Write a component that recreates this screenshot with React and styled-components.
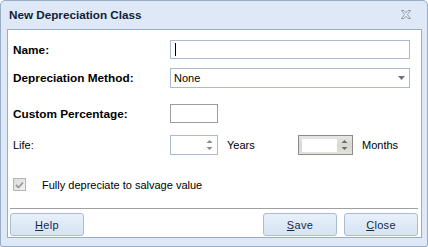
import React from 'react';
import styled, { createGlobalStyle } from 'styled-components';

const GlobalStyle = createGlobalStyle`
  html, body {
    margin: 0;
    padding: 0;
    background: #ffffff;
  }
  body {
    font-family: "Liberation Sans", Arial, sans-serif;
    font-size: 11px;
    color: #000;
  }
`;

const CloseIcon = () => (
  <svg width="12" height="11" viewBox="0 0 12 11">
    <path
      d="M1.5 1.5 L4 1.5 L6 3.8 L8 1.5 L10.5 1.5 L7.3 5.5 L10.5 9.5 L8 9.5 L6 7.2 L4 9.5 L1.5 9.5 L4.7 5.5 Z"
      fill="#eef2f8"
      stroke="#8b9bb4"
      strokeWidth="1"
      strokeLinejoin="round"
    />
  </svg>
);

const SpinArrows = ({ disabled }) => (
  <svg width="7" height="12" viewBox="0 0 7 12">
    <path d="M3.5 1 L6.5 4 L0.5 4 Z" fill={disabled ? '#6d6d6d' : '#8a8a8a'} />
    <path d="M0.5 8 L6.5 8 L3.5 11 Z" fill={disabled ? '#6d6d6d' : '#8a8a8a'} />
  </svg>
);

const App = () => (
  <>
    <GlobalStyle />
    <Window>
      <TitleBar>
        <Title>New Depreciation Class</Title>
        <CloseButton>
          <CloseIcon />
        </CloseButton>
      </TitleBar>

      <Panel>
        <Form>
          <Row $mt={10}>
            <Label $bold>Name:</Label>
            <TextBox $width={240} $height={19}>
              <Caret />
            </TextBox>
          </Row>

          <Row $mt={9}>
            <Label $bold>Depreciation Method:</Label>
            <Select>
              <span>None</span>
              <svg width="7" height="4" viewBox="0 0 7 4">
                <path d="M0 0 L7 0 L3.5 4 Z" fill="#6d7480" />
              </svg>
            </Select>
          </Row>

          <Row $mt={16}>
            <Label $bold>Custom Percentage:</Label>
            <TextBox $width={48} $height={19} $gray />
          </Row>

          <Row $mt={12}>
            <Label>Life:</Label>
            <Spinner $width={48}>
              <SpinField />
              <SpinButtons>
                <SpinArrows />
              </SpinButtons>
            </Spinner>
            <Unit $width={71}>Years</Unit>
            <DisabledSpinner>
              <DisabledField />
              <DisabledButtons>
                <SpinArrows disabled />
              </DisabledButtons>
            </DisabledSpinner>
            <Unit>Months</Unit>
          </Row>

          <CheckRow>
            <CheckBox>
              <svg width="9" height="8" viewBox="0 0 9 8">
                <path d="M1 4 L3.5 6.5 L8 1.5" fill="none" stroke="#9a9a9a" strokeWidth="1.8" />
              </svg>
            </CheckBox>
            <span>Fully depreciate to salvage value</span>
          </CheckRow>
        </Form>

        <Footer>
          <Button>
            <u>H</u>elp
          </Button>
          <Spacer />
          <Button>
            <u>S</u>ave
          </Button>
          <Button>
            <u>C</u>lose
          </Button>
        </Footer>
      </Panel>
    </Window>
  </>
);

export default App;

const Window = styled.div`
  box-sizing: border-box;
  width: 428px;
  height: 247px;
  display: flex;
  flex-direction: column;
  background: #dfe8f6;
  border: 1px solid #99acc6;
  border-radius: 5px 5px 2px 2px;
  padding: 0 5px 8px 6px;
`;

const TitleBar = styled.div`
  height: 27px;
  display: flex;
  align-items: center;
  padding: 0 10px 1px 2px;
`;

const Title = styled.div`
  flex: 1;
  font-weight: bold;
  font-size: 11.7px;
  color: #0f1f38;
`;

const CloseButton = styled.div`
  display: flex;
  align-items: center;
`;

const Panel = styled.div`
  flex: 1;
  display: flex;
  flex-direction: column;
  background: #ffffff;
  border: 1px solid #99acc6;
`;

const Form = styled.div`
  flex: 1;
  display: flex;
  flex-direction: column;
  padding-left: 5px;
`;

const Row = styled.div`
  display: flex;
  align-items: center;
  margin-top: ${p => p.$mt}px;
`;

const Label = styled.div`
  width: 157px;
  flex-shrink: 0;
  font-weight: ${p => (p.$bold ? 'bold' : 'normal')};
  font-size: ${p => (p.$bold ? '11.8px' : '11px')};
`;

const TextBox = styled.div`
  box-sizing: border-box;
  flex-shrink: 0;
  width: ${p => p.$width}px;
  height: ${p => p.$height}px;
  border: 1px solid ${p => (p.$gray ? '#9c9c9c' : '#abbad0')};
  background: #fff;
  display: flex;
  align-items: center;
  padding-left: 4px;
`;

const Caret = styled.div`
  width: 1px;
  height: 13px;
  background: #000;
`;

const Select = styled.div`
  box-sizing: border-box;
  width: 240px;
  height: 20px;
  border: 1px solid #abbad0;
  display: flex;
  align-items: center;
  justify-content: space-between;
  padding: 0 4px 0 3px;
`;

const Spinner = styled.div`
  box-sizing: border-box;
  flex-shrink: 0;
  width: ${p => p.$width}px;
  height: 20px;
  border: 1px solid #abbad0;
  display: flex;
`;

const SpinField = styled.div`
  flex: 1;
`;

const SpinButtons = styled.div`
  width: 16px;
  display: flex;
  align-items: center;
  justify-content: center;
`;

const Unit = styled.div`
  flex-shrink: 0;
  margin-left: 9px;
  width: ${p => (p.$width ? `${p.$width}px` : 'auto')};
`;

const DisabledSpinner = styled.div`
  box-sizing: border-box;
  flex-shrink: 0;
  width: 55px;
  height: 20px;
  border: 1px solid #8c8c8c;
  background: linear-gradient(#e6e6e6, #d8d8d0 50%, #e2e2de);
  display: flex;
  align-items: center;
  padding: 2px 0 2px 3px;
`;

const DisabledField = styled.div`
  width: 35px;
  height: 13px;
  background: #ffffff;
`;

const DisabledButtons = styled.div`
  flex: 1;
  display: flex;
  align-items: center;
  justify-content: center;
`;

const CheckRow = styled.div`
  display: flex;
  align-items: center;
  margin-top: 23px;
  gap: 16px;
`;

const CheckBox = styled.div`
  box-sizing: border-box;
  width: 13px;
  height: 13px;
  border: 1px solid #b5b5b5;
  background: linear-gradient(135deg, #dcdcdc, #f2f2f2);
  display: flex;
  align-items: center;
  justify-content: center;
`;

const Footer = styled.div`
  display: flex;
  gap: 7px;
  margin: 0 3px 0 2px;
  padding: 4px 0 1px 0;
  border-top: 1px solid #a0a0a0;
`;

const Spacer = styled.div`
  flex: 1;
`;

const Button = styled.div`
  box-sizing: border-box;
  width: 74px;
  height: 23px;
  border: 1px solid #a9bcd4;
  border-radius: 3px;
  background: linear-gradient(#e8f0fa, #d6e3f3);
  color: #15294a;
  font-size: 11px;
  display: flex;
  align-items: center;
  justify-content: center;
  letter-spacing: 0.3px;
`;
